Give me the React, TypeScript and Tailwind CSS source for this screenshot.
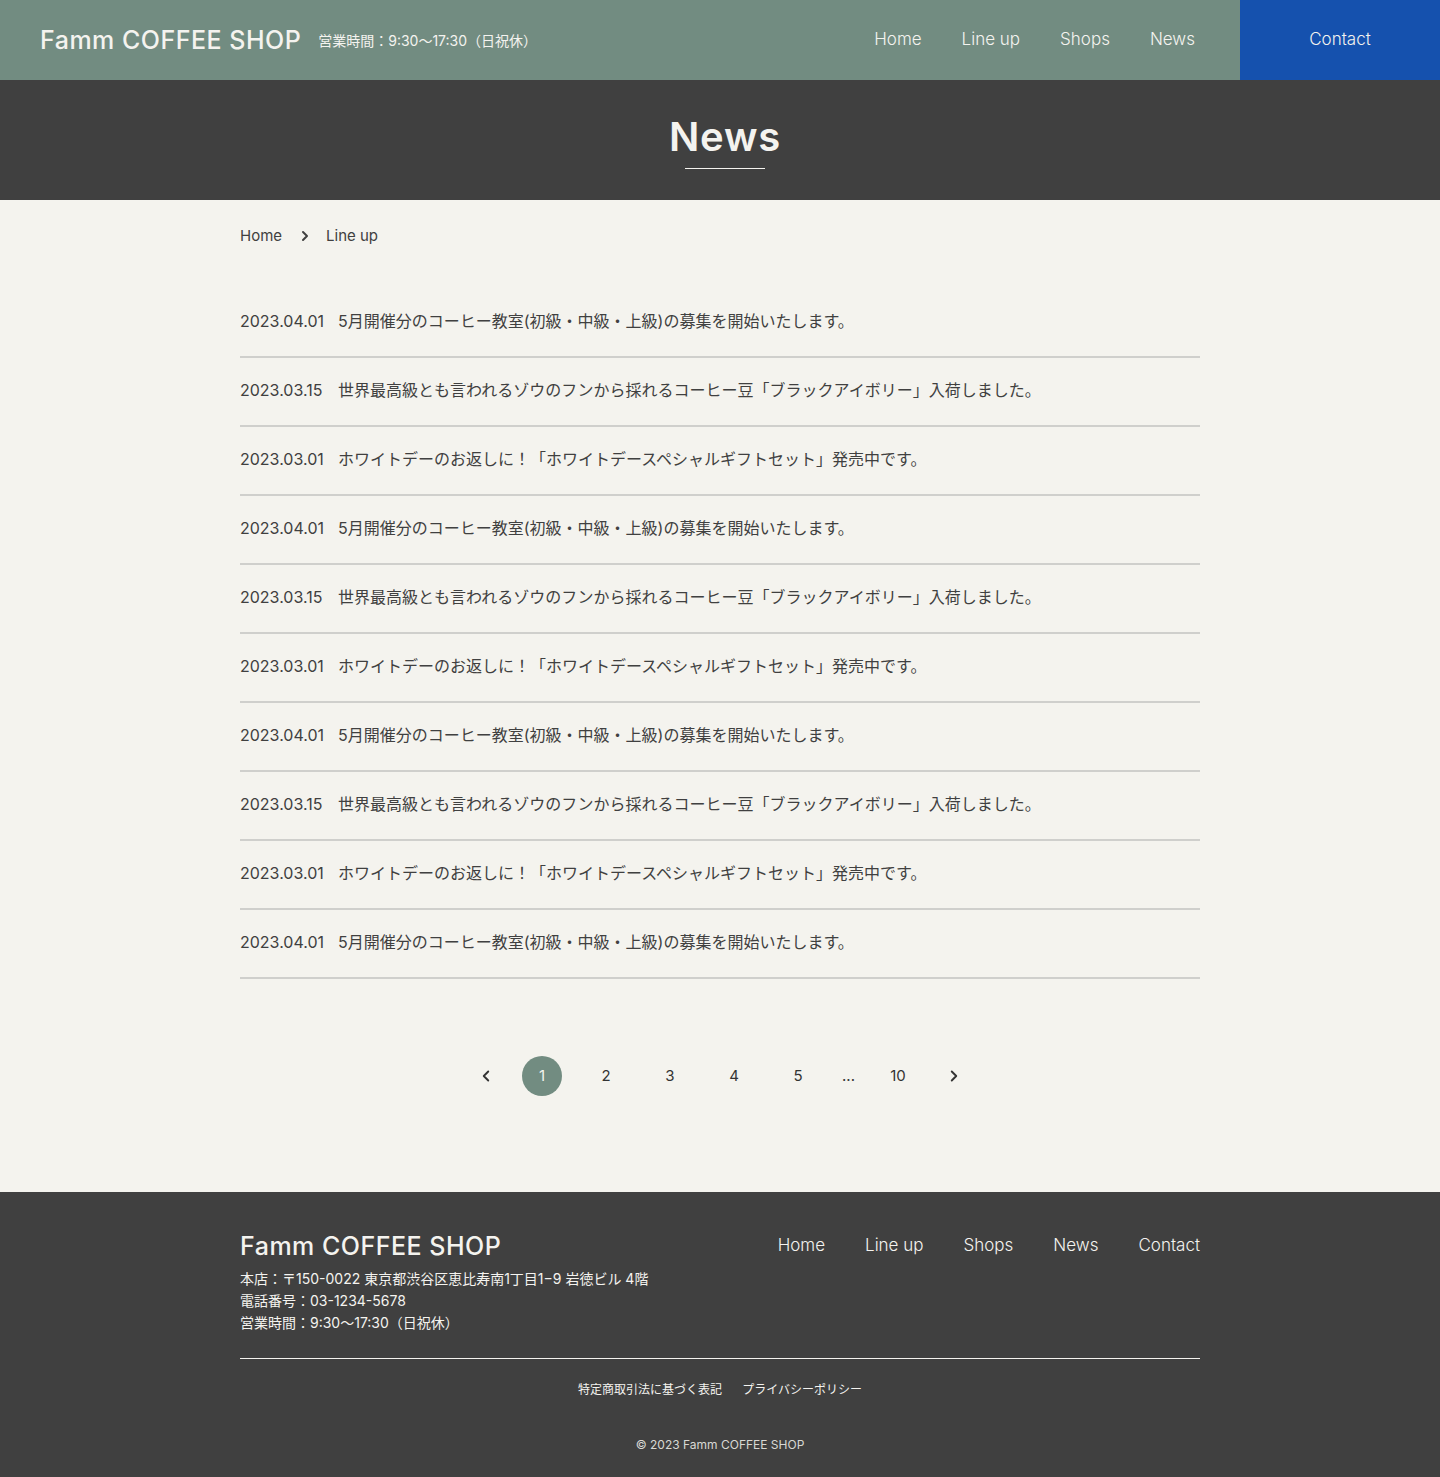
import { ChevronLeft, ChevronRight } from "lucide-react";

const navItems = ["Home", "Line up", "Shops", "News"]

const news = [
  { date: "2023.04.01", title: "5月開催分のコーヒー教室(初級・中級・上級)の募集を開始いたします。" },
  { date: "2023.03.15", title: "世界最高級とも言われるゾウのフンから採れるコーヒー豆「ブラックアイボリー」入荷しました。" },
  { date: "2023.03.01", title: "ホワイトデーのお返しに！「ホワイトデースペシャルギフトセット」発売中です。" },
]

const rows = [0, 1, 2, 0, 1, 2, 0, 1, 2, 0].map((i) => news[i])

function Header() {
  return (
    <header className="h-20 bg-[#728c81] flex items-center text-[#f4f3ef]">
      <div className="flex items-center pl-10">
        <h1 className="text-[25px] font-medium leading-none tracking-[0.02em]">Famm COFFEE SHOP</h1>
        <span className="ml-[17px] text-[14px]">営業時間：9:30〜17:30（日祝休）</span>
      </div>
      <nav className="ml-auto flex items-center gap-10 mr-[45px] text-[17px] font-light">
        {navItems.map((item) => (
          <a key={item} href="#" className="hover:opacity-80">{item}</a>
        ))}
      </nav>
      <a href="#" className="w-[200px] h-full bg-[#1551ae] flex items-center justify-center text-[17px] font-light">
        Contact
      </a>
    </header>
  )
}

function PageTitle() {
  return (
    <div className="h-[120px] bg-[#404040] flex flex-col items-center pt-[29px] pl-[10px]">
      <h2 className="text-[40px] font-semibold leading-[56px] tracking-[0.02em] text-[#f4f3ef]">News</h2>
      <span className="mt-[3px] w-20 h-px bg-[#f4f3ef]" />
    </div>
  )
}

function Pagination() {
  const pages = ["1", "2", "3", "4", "5"]
  return (
    <div className="flex items-center justify-center gap-6 text-[15px] text-[#333]">
      <button className="w-6 h-10 flex items-center justify-center">
        <ChevronLeft size={18} strokeWidth={2.5} />
      </button>
      {pages.map((p) => (
        <button
          key={p}
          className={
            p === "1"
              ? "w-10 h-10 rounded-full bg-[#728c81] text-[#f4f3ef] flex items-center justify-center"
              : "w-10 h-10 flex items-center justify-center"
          }
        >
          {p}
        </button>
      ))}
      <span className="w-3 text-center">...</span>
      <button className="w-10 h-10 flex items-center justify-center">10</button>
      <button className="w-6 h-10 flex items-center justify-center">
        <ChevronRight size={18} strokeWidth={2.5} />
      </button>
    </div>
  )
}

function Footer() {
  return (
    <footer className="bg-[#404040] text-[#f4f3ef] pt-10 pb-[23px]">
      <div className="w-[960px] mx-auto">
        <div className="flex justify-between items-start">
          <div>
            <p className="text-[25px] font-medium leading-[28px] tracking-[0.02em]">Famm COFFEE SHOP</p>
            <div className="mt-2 text-[14px] leading-[22px]">
              <p>本店：〒150-0022 東京都渋谷区恵比寿南1丁目1−9 岩徳ビル 4階</p>
              <p>電話番号：03-1234-5678</p>
              <p>営業時間：9:30〜17:30（日祝休）</p>
            </div>
          </div>
          <nav className="flex gap-10 text-[17px] leading-[26px] font-light">
            {[...navItems, "Contact"].map((item) => (
              <a key={item} href="#">{item}</a>
            ))}
          </nav>
        </div>
        <div className="mt-6 h-px bg-[#f4f3ef]" />
        <div className="mt-[22px] flex justify-center gap-5 text-[12px] leading-[18px]">
          <a href="#">特定商取引法に基づく表記</a>
          <a href="#">プライバシーポリシー</a>
        </div>
        <p className="mt-[37px] text-center text-[12px] leading-[18px] text-[#d8d8d4]">© 2023 Famm COFFEE SHOP</p>
      </div>
    </footer>
  )
}

export default function App() {
  return (
    <div className="min-h-screen bg-[#f4f3ee] font-['Inter','Noto_Sans_CJK_JP',sans-serif] text-[#404040]">
      <Header />
      <PageTitle />
      <main className="w-[960px] mx-auto pt-6 pb-24">
        <div className="flex items-center text-[15px] leading-6">
          <a href="#">Home</a>
          <ChevronRight size={16} strokeWidth={3} className="ml-[15px] mr-[13px]" />
          <a href="#">Line up</a>
        </div>

        <ul className="mt-[41px]">
          {rows.map((row, i) => (
            <li key={i} className="pt-5 pb-[23px] border-b-2 border-[#cfcfcc] text-[16px] leading-6 flex">
              <span className="w-[98px] shrink-0">{row.date}</span>
              <span>{row.title}</span>
            </li>
          ))}
        </ul>

        <div className="mt-[77px]">
          <Pagination />
        </div>
      </main>
      <Footer />
    </div>
  )
}
